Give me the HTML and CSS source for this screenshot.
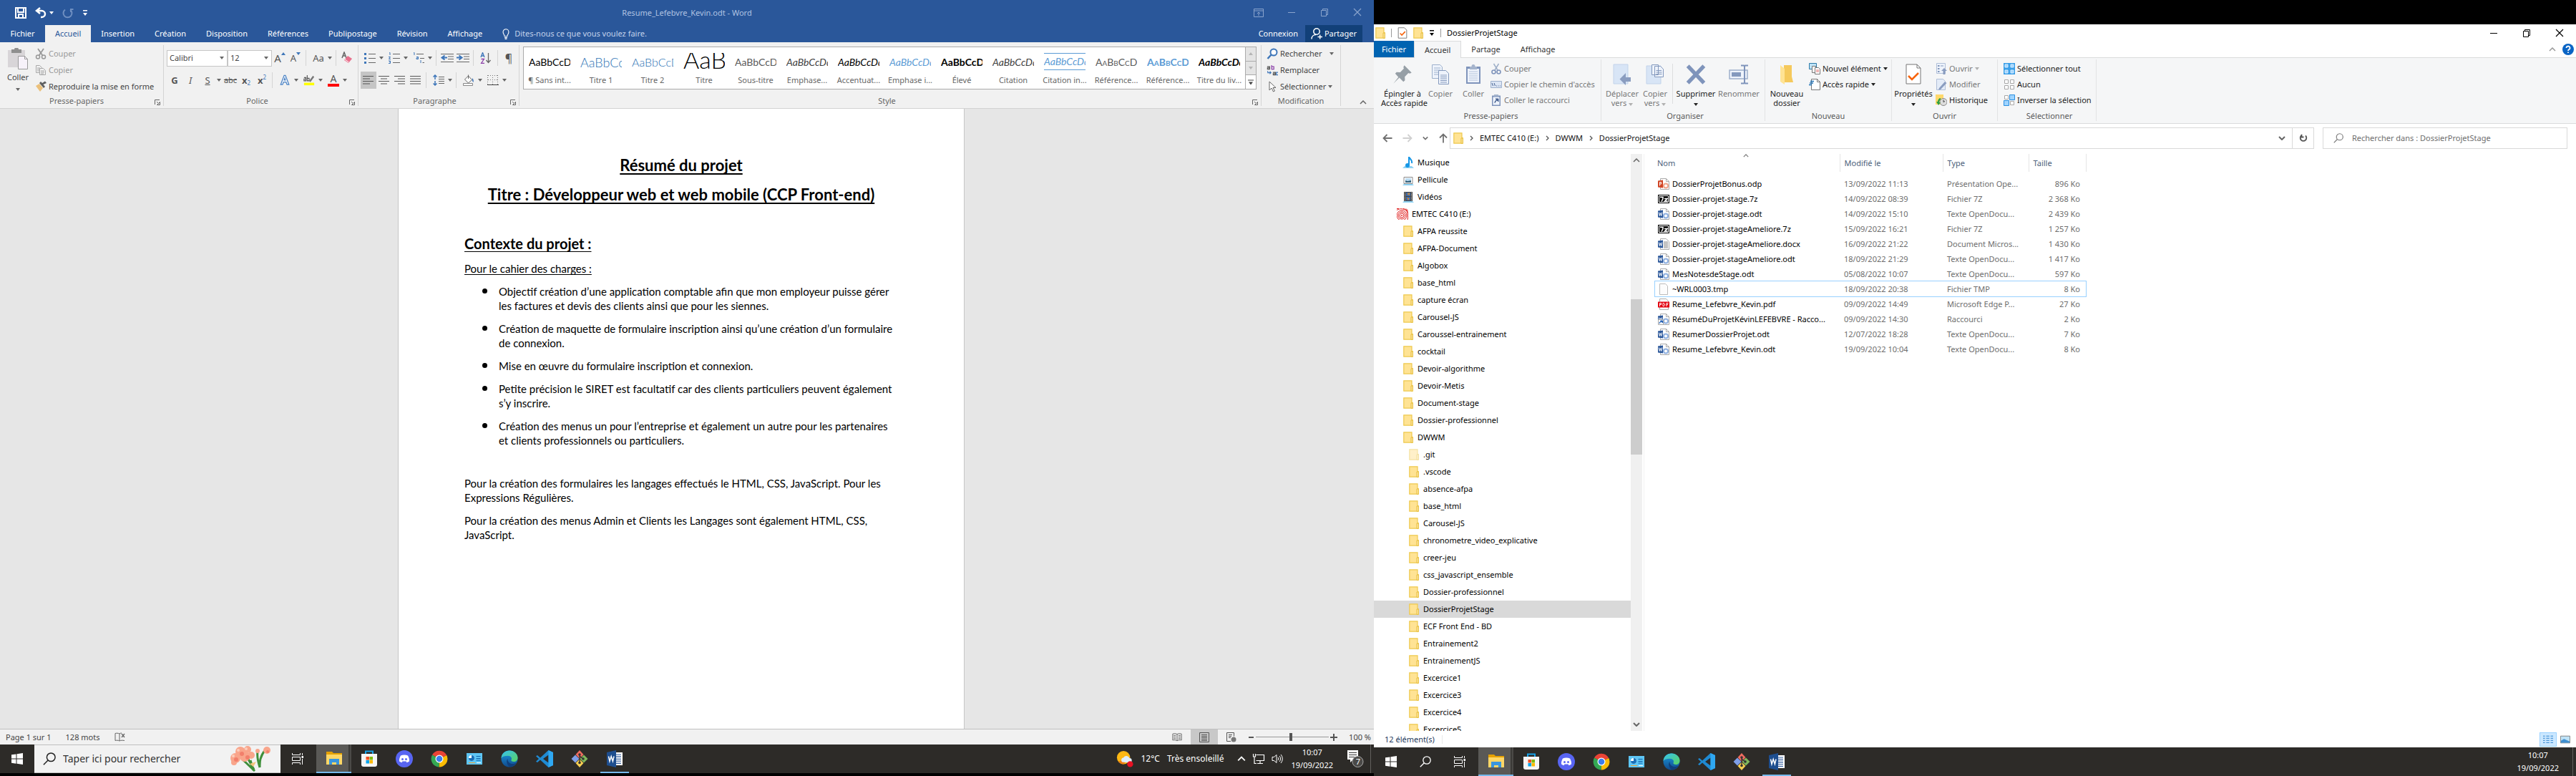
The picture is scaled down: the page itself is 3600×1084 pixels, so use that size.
FILE: index.html
```
<!DOCTYPE html>
<html lang="fr">
<head>
<meta charset="utf-8">
<title>Resume_Lefebvre_Kevin.odt - Word</title>
<link rel="stylesheet" href="styles.css">
</head>
<body>
<svg class="defs" aria-hidden="true">
  <defs>
    <linearGradient id="edge-a" x1="0" y1="0" x2="1" y2="1"><stop offset="0" stop-color="#35c1f1"/><stop offset="1" stop-color="#5bd45f"/></linearGradient>
    <linearGradient id="edge-b" x1="0" y1="0" x2="0" y2="1"><stop offset="0" stop-color="#1b9de2"/><stop offset="1" stop-color="#114a8b"/></linearGradient>
  </defs>
  <symbol id="caret" viewBox="0 0 6 4"><path d="M0 0h6L3 4z" fill="currentColor"/></symbol>
  <symbol id="launcher" viewBox="0 0 8 8"><path d="M.5 7V.5H7M3 3l3 3M7.500 3.500v4h-4z" fill="none" stroke="currentColor"/></symbol>
  <symbol id="save" viewBox="0 0 16 16"><path d="M1 1h14v14H1zM4 1v6h8V1M5 15v-5h6v5" fill="none" stroke="#fff" stroke-width="2"/></symbol>
  <symbol id="undo" viewBox="0 0 16 16"><path d="M7 1 2 5l5 4M2 5h7a5 4.500 0 0 1 0 9H8" fill="none" stroke="#fff" stroke-width="2.500"/></symbol>
  <symbol id="redo" viewBox="0 0 16 16"><path d="M4 3.500a6 6 0 1 0 7 0M12 7V3h3.500" fill="none" stroke="#6f8fc1" stroke-width="2"/></symbol>
  <symbol id="custom" viewBox="0 0 8 8"><path d="M1 0h6v1.500H1zM1 4h6L4 8z" fill="currentColor"/></symbol>
  <symbol id="ribbonopt" viewBox="0 0 14 12"><path d="M.5.5h13v11H.5zM.5 3h13M7 10V5M5 7l2-2 2 2" fill="none" stroke="currentColor"/></symbol>
  <symbol id="min" viewBox="0 0 12 12"><path d="M1 6.500h10" stroke="currentColor"/></symbol>
  <symbol id="restore" viewBox="0 0 12 12"><path d="M1.500 3.500h7v8h-7zM3.500 3.500v-2h7v8h-2" fill="none" stroke="currentColor"/></symbol>
  <symbol id="close" viewBox="0 0 12 12"><path d="m1 1 10 10M11 1 1 11" stroke="currentColor" stroke-width="1.200"/></symbol>
  <symbol id="bulb" viewBox="0 0 10 16"><path d="M3 11.500C3 9 .8 8 .8 5a4.200 4.200 0 0 1 8.400 0c0 3-2.200 4-2.200 6.500zM3 13.500h4M3.500 15.300h3" fill="none" stroke="#fff" stroke-width="1.200"/></symbol>
  <symbol id="person" viewBox="0 0 16 16"><circle cx="8" cy="5" r="4.200" fill="none" stroke="#fff" stroke-width="1.500"/><path d="M1 15.500c0-4 3-6 6-6M9.500 12.500H16M12.700 9.500v6" fill="none" stroke="#fff" stroke-width="1.500"/></symbol>
  <symbol id="paste" viewBox="0 0 28 30"><path d="M0 3h24v24H0z" fill="#d8d5d8"/><path d="M5 2h4a3 2.500 0 0 1 6 0h4v5H5z" fill="#8f8f8f"/><path d="M14.500 11.500h9l4 4v14h-13z" fill="#f7f2fa" stroke="#9b9b9b"/><path d="M23.500 11.500v4h4" fill="none" stroke="#9b9b9b"/></symbol>
  <symbol id="cut" viewBox="0 0 16 16"><path d="m4 1 6.500 9.500M12 1 5.500 10.500" stroke="currentColor" stroke-width="1.800"/><circle cx="4" cy="12.500" r="2.500" fill="none" stroke="currentColor" stroke-width="1.500"/><circle cx="12" cy="12.500" r="2.500" fill="none" stroke="currentColor" stroke-width="1.500"/></symbol>
  <symbol id="copy" viewBox="0 0 16 16"><path d="M1.500 1.500h5l3 3v7h-8zM3 5h4M3 7h4M3 9h3" fill="none" stroke="#a8a8a8"/><path d="M6.500 5.500h5l3 3v6h-8z" fill="#f1f1f1" stroke="#a8a8a8"/><path d="M8 9h5M8 11h5M8 13h4" stroke="#a8a8a8"/></symbol>
  <symbol id="brush" viewBox="0 0 16 16"><path d="M1 7 6 4l5 6-4 5z" fill="#ebc07a"/><path d="m6 3 6 7 2-2-2.500-3L16 3l-2-2.500L10 3 8 1z" fill="#5e5e5e"/></symbol>
  <symbol id="up-tri" viewBox="0 0 6 4"><path d="M3 0l3 4H0z" fill="#3e76b9"/></symbol>
  <symbol id="down-tri" viewBox="0 0 6 4"><path d="M0 0h6L3 4z" fill="#3e76b9"/></symbol>
  <symbol id="eraser" viewBox="0 0 16 18"><path d="M1 9 4 1l3 8M2 6h4" fill="none" stroke="#666" stroke-width="1.500"/><path d="m9 6 6 4-5 6-6-4z" fill="#e8718d"/><path d="m5 11 5.500 4" stroke="#fff"/></symbol>
  <symbol id="bullets" viewBox="0 0 16 16"><path d="M0 1h3v3H0zM0 7h3v3H0zM0 13h3v3H0z" fill="#3e76b9"/><path d="M6 2.500h10M6 8.500h10M6 14.500h10" stroke="#666"/></symbol>
  <symbol id="numbers" viewBox="0 0 16 16"><path d="M1 1l1-.5V4M0 6.500h2.500L.5 9.500h2.500M0 12h2.500v1.500H1 2.500v2H0" fill="none" stroke="#3e76b9"/><path d="M6 2.500h10M6 8.500h10M6 14.500h10" stroke="#666"/></symbol>
  <symbol id="multi" viewBox="0 0 16 16"><path d="M1 1l1-.5V4M5 6.500h2.500v3H5V8h2M11 11v4" fill="none" stroke="#3e76b9"/><path d="M5 2.500h10M10 8.500h6M13.500 14.500H16" stroke="#666"/></symbol>
  <symbol id="outdent" viewBox="0 0 18 14"><path d="M0 1.500h18M10 5h8M10 8.500h8M0 12.500h18" stroke="#666"/><path d="M9 6.500H3M5.500 3.500l-4 3 4 3" fill="none" stroke="#3e76b9" stroke-width="2"/></symbol>
  <symbol id="indent" viewBox="0 0 18 14"><path d="M0 1.500h18M10 5h8M10 8.500h8M0 12.500h18" stroke="#666"/><path d="M0 6.500h6M3.500 3.500l4 3-4 3" fill="none" stroke="#3e76b9" stroke-width="2"/></symbol>
  <symbol id="sort" viewBox="0 0 16 16"><path d="M1 7 3.500.5 6 7M2 5h3" fill="none" stroke="#3e76b9" stroke-width="1.300"/><path d="M1.500 9.500h4l-4 6h4.500" fill="none" stroke="#8a3fa8" stroke-width="1.300"/><path d="M11.500 1v13M8.500 11l3 3.500 3-3.500" fill="none" stroke="#666" stroke-width="1.300"/></symbol>
  <symbol id="al" viewBox="0 0 16 14"><path d="M0 1.500h15M0 5h10M0 8.500h15M0 12h10" stroke="#555"/></symbol>
  <symbol id="ac" viewBox="0 0 16 14"><path d="M0 1.500h15M3 5h9M0 8.500h15M3 12h9" stroke="#555"/></symbol>
  <symbol id="ar" viewBox="0 0 16 14"><path d="M0 1.500h15M5 5h10M0 8.500h15M5 12h10" stroke="#555"/></symbol>
  <symbol id="aj" viewBox="0 0 16 14"><path d="M0 1.500h15M0 5h15M0 8.500h15M0 12h15" stroke="#555"/></symbol>
  <symbol id="spacing" viewBox="0 0 16 16"><path d="M3 1v6M.5 3.500 3 1l2.500 2.500M3 9v6M.5 12.500 3 15l2.500-2.500" fill="none" stroke="#3e76b9" stroke-width="1.500"/><path d="M8 3.500h8M8 6.500h8M8 9.500h8M8 12.500h8" stroke="#666"/></symbol>
  <symbol id="bucket" viewBox="0 0 16 16"><path d="m2.500 7 5-5 5 5.500-5 4.500zM7.500 6V.5" fill="#fff" stroke="#666"/><path d="M13 5c2 2 2 4 1.500 6-1.500-1-2-3-1.500-6z" fill="#3e76b9"/><path d="M.5 12.500h13v3H.5z" fill="#fff" stroke="#888"/></symbol>
  <symbol id="borders" viewBox="0 0 16 16"><path d="M.5 1v14M7.500 1v14M14.500 1v14M1 1.500h14M1 7.500h14" fill="none" stroke="#777" stroke-dasharray="1 2"/><path d="M0 14.500h16" stroke="#444"/></symbol>
  <symbol id="texteffect" viewBox="0 0 16 18"><path d="M1.500 16 7 1.500h2L14.500 16h-3L10 12H6l-1.500 4zM7 9h2L8 6z" fill="#fff" stroke="#4a82c4" stroke-width="1.400"/></symbol>
  <symbol id="marker" viewBox="0 0 18 18"><path d="M1 5h3v5H1V7h3M6 1v9h3V6H6" fill="none" stroke="#555" stroke-width="1.300"/><path d="m9 10 6-8 2 2-6 8z" fill="#777"/><path d="M1 13h16v4H1z" fill="#ff0"/></symbol>
  <symbol id="find" viewBox="0 0 16 16"><circle cx="10" cy="6" r="4.500" fill="#fff" stroke="#3e76b9" stroke-width="2"/><path d="M6.500 9.500 1.500 15" stroke="#3e76b9" stroke-width="2.500"/></symbol>
  <symbol id="replace" viewBox="0 0 18 18"><path d="M1 3.500h4v4H1.500V5.500H5M10 12.500h4v4h-3.500v-2H14" fill="none" stroke="#555" stroke-width="1.300"/><path d="M8 1v6.500h3.500v-4H8" fill="none" stroke="#8a3fa8" stroke-width="1.300"/><path d="M18 12.500h-2.500v4H18M2 10v3h5M5 11l2 2-2 2" fill="none" stroke="#3e76b9" stroke-width="1.300"/></symbol>
  <symbol id="pointer" viewBox="0 0 12 16"><path d="M2 1v12l3-3 2.500 5 2-1L7 9.500h4z" fill="#fff" stroke="#666"/></symbol>
  <symbol id="chev-up" viewBox="0 0 10 6"><path d="M1 5l4-4 4 4" fill="none" stroke="currentColor" stroke-width="1.500"/></symbol>
  <symbol id="chev-down" viewBox="0 0 10 6"><path d="M1 1l4 4 4-4" fill="none" stroke="currentColor" stroke-width="2"/></symbol>
  <symbol id="chev-right" viewBox="0 0 5 8"><path d="M1 1l3 3-3 3" fill="none" stroke="currentColor" stroke-width="1.300"/></symbol>
  <symbol id="more" viewBox="0 0 8 7"><path d="M0 0h8v1H0zM1 3h6L4 7z" fill="currentColor"/></symbol>
  <symbol id="proof" viewBox="0 0 16 14"><path d="M7 2C5 1 3 1 1 1.500v10c2-.5 4-.5 6 .5zM7 2c1-.8 2-1 3-1M7 12c2-1 4-1 7-.5" fill="none" stroke="#666"/><path d="m10 2 4 5M14 2l-4 5" stroke="#666" stroke-width="1.300"/></symbol>
  <symbol id="read" viewBox="0 0 16 14"><path d="M8 2C6 .8 3 .8 1 1.500v10C3 11 6 11 8 12.500 10 11 13 11 15 11.500v-10C13 .8 10 .8 8 2zv10M2.500 4H6M2.500 6.500H6M2.500 9H6M10 4h3.500M10 6.500h3.500M10 9h3.500" fill="none" stroke="#555"/></symbol>
  <symbol id="print" viewBox="0 0 14 14"><path d="M.5.500h13v13H.5zM3 3.500h8M3 5.500h8M3 7.500h8M3 9.500h8M3 11.500h8" fill="none" stroke="#555"/></symbol>
  <symbol id="web" viewBox="0 0 14 14"><path d="M6 12.500H.5V.500h10v5M3 3.500h5M3 5.500h4M3 7.500h3" fill="none" stroke="#555"/><circle cx="10" cy="10" r="3.500" fill="#777"/></symbol>

  <symbol id="windows" viewBox="0 0 16 16"><path d="M0 2.300 6.500 1.400v6.200H0zM7.500 1.200 16 0v7.600H7.500zM0 8.500h6.500v6.200L0 13.800zM7.500 8.500H16V16l-8.500-1.200z" fill="#fff"/></symbol>
  <symbol id="search" viewBox="0 0 16 16"><circle cx="10" cy="6" r="5.200" fill="none" stroke="currentColor" stroke-width="1.300"/><path d="M6.300 9.700.8 15.300" stroke="currentColor" stroke-width="1.300"/></symbol>
  <symbol id="taskview" viewBox="0 0 16 16"><path d="M.5 0v2.500h11V0M.5 16v-2.500h11V16M.5 5.500h11v5H.5zM14.500 0v3M14.500 8v8" fill="none" stroke="#fff"/><path d="M13.500 4h2.500v3h-2.500z" fill="#fff"/></symbol>
  <symbol id="explorer" viewBox="0 0 24 24"><path d="M1 3h8l2 2h12v4H1z" fill="#e5a100"/><path d="M1 7h22v14H1z" fill="#ffd766"/><path d="M5 13h14v8h-4v-3H9v3H5z" fill="#3a96dd"/></symbol>
  <symbol id="store" viewBox="0 0 24 24"><path d="M7 6V1.500h10V6" fill="none" stroke="#17a2e8" stroke-width="2"/><path d="M1 5h22v15a3 3 0 0 1-3 3H4a3 3 0 0 1-3-3z" fill="#f5f5f5"/><path d="M7.500 9H12v4.500H7.500z" fill="#f25022"/><path d="M12.500 9H17v4.500h-4.500z" fill="#7fba00"/><path d="M7.500 14H12v4.500H7.500z" fill="#00a4ef"/><path d="M12.500 14H17v4.500h-4.500z" fill="#ffb900"/></symbol>
  <symbol id="discord" viewBox="0 0 24 24"><circle cx="12" cy="12" r="12" fill="#5865f2"/><path d="M7 7.500c3-1.500 7-1.500 10 0 1.500 2.500 2.300 5.500 2 8-1 .9-2.300 1.500-3.500 1.700l-1-1.700h-5l-1 1.700C7.300 17 6 16.400 5 15.500c-.3-2.500.5-5.500 2-8z" fill="#fff"/><circle cx="9.500" cy="12.500" r="1.500" fill="#5865f2"/><circle cx="14.500" cy="12.500" r="1.500" fill="#5865f2"/></symbol>
  <symbol id="chrome" viewBox="0 0 24 24"><path d="M12 12 2 6.500A11.500 11.500 0 0 1 22.300 7z" fill="#ea4335"/><path d="M12 12 22.300 7A11.500 11.500 0 0 1 11.500 23.500z" fill="#fbbc04"/><path d="M12 12l-.5 11.500A11.500 11.500 0 0 1 2 6.500z" fill="#34a853"/><circle cx="12" cy="12" r="5.500" fill="#fff"/><circle cx="12" cy="12" r="4.300" fill="#3b7ded"/></symbol>
  <symbol id="panel" viewBox="0 0 24 24"><path d="M1 4h22v16H1z" fill="#5ec6f5"/><circle cx="8" cy="11" r="4" fill="#fff"/><path d="M8 11V7a4 4 0 1 1-4 4z" fill="#1a6fb8"/><path d="M14.500 8.500h6M14.500 11.500h6M14.500 14h6" stroke="#0d5fa8"/><path d="M4 17.500h9" stroke="#f2a93b"/><path d="M15 17.500h6" stroke="#fff"/></symbol>
  <symbol id="edge" viewBox="0 0 24 24"><circle cx="12" cy="12" r="11.500" fill="url(#edge-b)"/><path d="M.5 11C1 4.500 6 .5 12 .5 18.500.5 23.500 5 23.500 10.500c0 3.500-2.500 5.500-5.500 5.500-2.500 0-4-1-3.500-2.200 1.500-2.800-.5-6-4.500-6C5.500 7.800 2 9 .5 11z" fill="url(#edge-a)"/><path d="M9.500 12c-.5 4 3 7.500 8 7 2-.2 3.500-1 4.500-2-1.500 3-4.500 5.800-9 6.300C9 22 6.500 15 9.500 12z" fill="#0f3f7c"/></symbol>
  <symbol id="vscode" viewBox="0 0 24 24"><path d="M17.500 0 24 3v18l-6.500 3L6 13.500 2 17l-2-1.200L4 12 0 8.200 2 7l4 3.500zM17.500 6.500 10 12l7.500 5.500z" fill="#1f8ad2"/><path d="M17.500 0 24 3v18l-6.500 3z" fill="#2fa8f2"/></symbol>
  <symbol id="git" viewBox="0 0 24 24"><path d="m12 0 5.500 6L12 12 6.500 6z" fill="#f06c5f"/><path d="m6 6.500 5.500 5.500L6 17.500.500 12z" fill="#7f9fe8"/><path d="m18 6.500 5.500 5.500-5.500 5.500-5.500-5.500z" fill="#80b85c"/><path d="m12 12.500 5.500 5.500-5.500 6-5.500-6z" fill="#f7cf52"/><path d="M12 5v13M12 8l5 4" stroke="#333" stroke-width="1.400"/><circle cx="12" cy="6" r="1.800" fill="#333"/><circle cx="12" cy="17.500" r="1.800" fill="#333"/><circle cx="17" cy="12" r="1.800" fill="#333"/></symbol>
  <symbol id="wordapp" viewBox="0 0 24 24"><path d="M12 3h11v18H12z" fill="#fff"/><path d="M14 6h7M14 8.500h7M14 11h7M14 13.500h7M14 16h7M14 18.500h7" stroke="#2b579a"/><path d="M1 3 14 0v24L1 21z" fill="#1e4e8f"/><path d="m3.500 8.500 1.500 7 2.200-7 2.200 7 1.600-7" fill="none" stroke="#fff" stroke-width="1.500"/></symbol>
  <symbol id="flowers" viewBox="0 0 60 36"><path d="M18 18 36 35M25 15l10 18M43 30c0-8 0-15 8-25M43 30c-3-10-4-16-3-22M30 20l4 14" fill="none" stroke="#3f8f3a" stroke-width="3"/><g fill="#f9a58b"><circle cx="16" cy="8" r="7"/><circle cx="26" cy="5" r="5"/><circle cx="9" cy="17" r="7"/><circle cx="22" cy="15" r="7"/><circle cx="31" cy="13" r="5"/><circle cx="7" cy="23" r="4"/><circle cx="53" cy="6" r="5"/><circle cx="40" cy="7" r="3"/></g><g fill="#f27f6b"><circle cx="18" cy="11" r="3"/><circle cx="10" cy="19" r="3"/><circle cx="26" cy="16" r="3"/><circle cx="54" cy="8" r="2"/></g><g fill="#fdcdbb"><circle cx="13" cy="6" r="2"/><circle cx="24" cy="4" r="2"/><circle cx="6" cy="14" r="2"/></g><path d="M29 25l9-3-4 7z" fill="#f3c57f"/></symbol>
  <symbol id="weather" viewBox="0 0 26 26"><circle cx="11" cy="11" r="10" fill="#fdb813"/><path d="M3 17a10 10 0 0 0 8 4l10-10z" fill="#f07f13"/><path d="M9 18a4 4 0 0 1 2-7 5 5 0 0 1 9 1 3.500 3.500 0 0 1 0 7z" fill="#dfeefb"/><circle cx="21" cy="21" r="4.500" fill="#e81123"/></symbol>
  <symbol id="network" viewBox="0 0 18 16"><path d="M5.500 2.500h11v8h-11M11 10.500v4M7 14.500h8M1.500 1v4h3V1M3 5v9.500h3" fill="none" stroke="#fff" stroke-width="1.200"/></symbol>
  <symbol id="sound" viewBox="0 0 16 14"><path d="M1 4.500h2.500L7 1.500v11L3.500 9.500H1zM9 5a3 3 0 0 1 0 4M11 3a6 6 0 0 1 0 8M13 1a9 9 0 0 1 0 12" fill="none" stroke="#fff"/></symbol>
  <symbol id="notif" viewBox="0 0 24 26"><path d="M1 1h15v13H9l-4 4v-4H1z" fill="#fff"/><path d="M3 4.500h11M3 7.500h11M3 10.500h8" stroke="#333"/><circle cx="15.500" cy="17" r="7.500" fill="#4a4947" stroke="#aaa"/></symbol>

  <symbol id="folder" viewBox="0 0 14 16"><path d="M.8.800H12v6.700h1.200v7.700H.8z" fill="#ffe394" stroke="#eec94f" stroke-width="1.200"/><path d="M11 8h2.300v7.300H11z" fill="#ffe9a8" stroke="#e6bd3c" stroke-width="1"/></symbol>
  <symbol id="doccheck" viewBox="0 0 14 17"><path d="M.8.800h9l3.400 3.500v11.900H.8z" fill="#fff" stroke="#777"/><path d="m3.500 9 2.500 2.700L11 6.500" fill="none" stroke="#f7630c" stroke-width="1.700"/></symbol>
  <symbol id="bigcheck" viewBox="0 0 22 30"><path d="M1 1h15l5 5v22H1z" fill="#fff" stroke="#777"/><path d="M16 1v5h5" fill="none" stroke="#777"/><path d="m4 17 5 5 9-9" fill="none" stroke="#f7630c" stroke-width="2.500"/></symbol>
  <symbol id="pin" viewBox="0 0 22 22"><path d="m13 1 8 8-2 1-1.500-.5-4 4 .2 4L12 19l-4.500-4.500L1 21l5.500-7L3 10l1.500-1.600 4 .2 4-4L12 3z" fill="#969fa6"/></symbol>
  <symbol id="bigcopy" viewBox="0 0 26 30"><path d="M1.500 1.500h11l3 3v16h-14z" fill="#eef3fb" stroke="#9db0cc"/><path d="M4 6h9M4 9h9M4 12h9M4 15h9" stroke="#9db0cc"/><path d="M10.500 9.500h10l4 4v15h-14z" fill="#eef3fb" stroke="#8499bd"/><path d="M13 16h9M13 18.500h9M13 21h9M13 23.500h9M13 26h9" stroke="#8499bd"/></symbol>
  <symbol id="bigpaste" viewBox="0 0 22 30"><path d="M1 4h20v24H1z" fill="#7f94bb"/><path d="M3 7h16v19H3z" fill="#eef3fb"/><path d="M6 4h2.500a2.500 3 0 0 1 5 0H16v4H6z" fill="#a5b4cc"/><path d="M5 11h12M5 14h12M5 17h12M5 20h12M5 23h12" stroke="#b5c4dc"/></symbol>
  <symbol id="bluecut" viewBox="0 0 16 16"><path d="m4.500 1 5.500 9M11.500 1 6 10" stroke="#9fb0c8" stroke-width="1.500"/><circle cx="4.500" cy="12.500" r="2.500" fill="none" stroke="#7f94bb" stroke-width="1.600"/><circle cx="11.500" cy="12.500" r="2.500" fill="none" stroke="#7f94bb" stroke-width="1.600"/></symbol>
  <symbol id="path" viewBox="0 0 16 10"><path d="M.5.500h15v9H.5z" fill="#dce6f5" stroke="#9db0cc"/><path d="m2 3 1.500 4M5 3l1.500 4M8 7h1M10.500 7h1M13 7h1" stroke="#44608f"/></symbol>
  <symbol id="shortcut" viewBox="0 0 16 16"><path d="M2 1.500h12V16H2z" fill="#7f94bb"/><path d="M3.500 3.500h9v11h-9z" fill="#eef3fb"/><path d="M5 0h6v2.500H5z" fill="#a5b4cc"/><path d="M6 12c0-3 1-4 3.500-4.500M7 6h4v4z" fill="#4a6594" stroke="#4a6594"/></symbol>
  <symbol id="moveto" viewBox="0 0 26 30"><path d="M1 1h20v27H1z" fill="#d8e5f6" stroke="#c2d3ea"/><path d="M25 19h-7v-6l-8.500 8.500L18 30v-5h7z" fill="#8a9dc0"/></symbol>
  <symbol id="copyto" viewBox="0 0 26 30"><path d="M1 3h20v25H1z" fill="#d8e5f6" stroke="#c2d3ea"/><path d="M8.500 1.500h9v14h-9zM12.500 3.500h8l4 4v11h-12z" fill="#eef3fb" stroke="#8499bd"/><path d="M14.500 9.500H22M14.500 12h8M14.500 14.500h8" stroke="#8499bd"/></symbol>
  <symbol id="delete" viewBox="0 0 26 26"><path d="m2.500 2 21 22M23.500 2l-21 22" stroke="#7f94bb" stroke-width="5"/></symbol>
  <symbol id="rename" viewBox="0 0 28 28"><path d="M1 8h25v12H1z" fill="#eef3fb" stroke="#9db0cc" stroke-width="1.500"/><path d="M4 11h13v6H4z" fill="#8499bd"/><path d="M17 1.500h4l1 1 1-1h4M17 26.500h4l1-1 1 1h4M22 2v24" fill="none" stroke="#7f94bb" stroke-width="2"/></symbol>
  <symbol id="newfolder" viewBox="0 0 20 30"><path d="M6 2h11v16l2 8H6z" fill="#f5c95c"/><path d="m1 2 6 5v22l-6-4z" fill="#ffe394"/></symbol>
  <symbol id="newitem" viewBox="0 0 16 16"><path d="M.5.500h10v8H.5z" fill="#bfe3f7" stroke="#2d7aa8"/><path d="M4.500 4.500h5v9h-5z" fill="#fff" stroke="#777"/><path d="M8.500 6.500h5l2 2v7h-7z" fill="#fff" stroke="#777"/><path d="M10 10h4M10 12h4" stroke="#e06a6a"/></symbol>
  <symbol id="easy" viewBox="0 0 16 16"><path d="M3.500.500h8l4 4v11h-12z" fill="#fff" stroke="#777"/><path d="M11.500.500v4h4" fill="none" stroke="#777"/><path d="M2 3.500h5M1 6h5M0 8.500h4" stroke="#1b6fb5" stroke-width="1.500"/></symbol>
  <symbol id="open" viewBox="0 0 16 16"><path d="M1.500.500h12v14h-12z" fill="#eef3fb" stroke="#b0bfd8"/><path d="M3 3h2.500v2H3zM3 7h2.500v2H3zM3 11h2.500v2H3z" fill="#8499bd"/><path d="M7 4h4" stroke="#8499bd"/><path d="m12 7 4 4h-2.500v5h-3v-5H8z" fill="#8a9dc0"/></symbol>
  <symbol id="edit" viewBox="0 0 16 16"><path d="M1.500.500h9l3 3v12h-12z" fill="#e4ecf8" stroke="#b0bfd8"/><path d="m5 13 8-9 2.500 2L7 15l-3 .5z" fill="#8a9dc0"/></symbol>
  <symbol id="history" viewBox="0 0 16 16"><path d="M0 0h11v14H0z" fill="#ffd96b"/><circle cx="11" cy="10.500" r="5" fill="#ddd" stroke="#888"/><path d="M11 7.500v3l2-1" fill="none" stroke="#444"/><path d="M3 10c0-3 2-5 4-5v2c-1 1-2 2-2 4h2l-3 4-3-5z" fill="#2ea043"/></symbol>
  <symbol id="selall" viewBox="0 0 16 16"><path d="M0 0h16v16H0z" fill="#3a9fe8"/><path d="M2 2h4v4H2zM10 2h4v4h-4zM2 10h4v4H2zM10 10h4v4h-4z" fill="#9fd4ff" stroke="#d9eeff"/></symbol>
  <symbol id="selnone" viewBox="0 0 16 16"><path d="M1.500 1.500h5v5h-5zM9.500 1.500h5v5h-5zM1.500 9.500h5v5h-5zM9.500 9.500h5v5h-5z" fill="#fff" stroke="#a8a8a8"/></symbol>
  <symbol id="selinv" viewBox="0 0 16 16"><path d="M1.500 1.500h5v5h-5zM9.500 9.500h5v5h-5z" fill="#fff" stroke="#a8a8a8"/><path d="M8.500.500h7v7h-7zM.5 8.500h7v7h-7z" fill="#9fd4ff" stroke="#2b8fe0"/></symbol>
  <symbol id="help" viewBox="0 0 16 16"><circle cx="8" cy="8" r="8" fill="#0a64c4"/><path d="M5.500 6a2.500 2.500 0 1 1 3.500 2.300c-.8.500-1 .9-1 1.700M8 11.500v1.500" fill="none" stroke="#fff" stroke-width="1.800"/></symbol>
  <symbol id="arrow-l" viewBox="0 0 14 12"><path d="M13.500 6H2M6.500 1 1.500 6l5 5" fill="none" stroke="currentColor" stroke-width="1.800"/></symbol>
  <symbol id="arrow-r" viewBox="0 0 14 12"><path d="M.5 6H12M7.500 1l5 5-5 5" fill="none" stroke="currentColor" stroke-width="1.800"/></symbol>
  <symbol id="arrow-u" viewBox="0 0 12 14"><path d="M6 13.500V2M1 6.500l5-5 5 5" fill="none" stroke="currentColor" stroke-width="1.800"/></symbol>
  <symbol id="refresh" viewBox="0 0 12 12"><path d="M3 2.500a4.300 4.300 0 1 0 6 0M6.500 4.500h-3V.800" fill="none" stroke="currentColor" stroke-width="1.800"/></symbol>
  <symbol id="music" viewBox="0 0 16 16"><path d="M3 13h10l3 3H0z" fill="#8fd3f5"/><circle cx="7" cy="12" r="3" fill="#1797e6"/><path d="M9 12V0c1 3 5 4 4 9" fill="none" stroke="#1797e6" stroke-width="2"/></symbol>
  <symbol id="photos" viewBox="0 0 16 16"><path d="M3 13h10l3 3H0z" fill="#8fd3f5"/><path d="M2 4.500h12v9H2z" fill="#fff" stroke="#8a8a8a"/><path d="M4 6h8v6H4z" fill="#bcdcf2"/><path d="M4 9l3 1 5-1v3H4z" fill="#35637c"/></symbol>
  <symbol id="videos" viewBox="0 0 16 16"><path d="M3 13h10l3 3H0z" fill="#8fd3f5"/><path d="M2 1h12v13H2z" fill="#444"/><path d="M5 2h6v5H5zM5 8h6v5H5z" fill="#3c6cb0"/><path d="M6 4l4-2v4zM6 9l4 1-2 3z" fill="#c98735"/><path d="M3.500 2v11M12.500 2v11" stroke="#ddd" stroke-dasharray="1 1"/></symbol>
  <symbol id="drive" viewBox="0 0 16 16"><path d="M0 0h16v16H0z" fill="#fff"/><g fill="none" stroke="#e02020"><circle cx="7" cy="10" r="3"/><circle cx="7" cy="10" r="5"/><circle cx="7" cy="10" r="7"/><path d="M0 2.500C4 0 10 0 14 4c2 3 2 8 1 12M0 .5h3M9 .5C13 1 16 4 16 8M13 .5l3 3M7 9v2M6 10h2"/></g></symbol>
  <symbol id="f-odp" viewBox="0 0 16 16"><path d="M3.500.500h8l4 4v11h-12z" fill="#fff" stroke="#aaa"/><path d="M11.500.500v4h4" fill="none" stroke="#aaa"/><circle cx="11" cy="10.500" r="3" fill="none" stroke="#f0a58b" stroke-width="2"/><path d="M0 3.500 7 2.500v11l-7-1z" fill="#d04525"/><path d="M2.500 10.500v-5h2v2.500h-2" fill="none" stroke="#fff"/></symbol>
  <symbol id="f-odt" viewBox="0 0 16 16"><path d="M3.500.500h8l4 4v11h-12z" fill="#fff" stroke="#aaa"/><path d="M11.500.500v4h4" fill="none" stroke="#aaa"/><circle cx="11" cy="10.500" r="3" fill="none" stroke="#8fb0e0" stroke-width="2"/><path d="M0 3.500 7 2.500v11l-7-1z" fill="#2b579a"/><path d="m1.300 5.500 1 5 1.200-4 1.200 4 1-5" fill="none" stroke="#fff"/></symbol>
  <symbol id="f-docx" viewBox="0 0 16 16"><path d="M3.500.500h8l4 4v11h-12z" fill="#fff" stroke="#aaa"/><path d="M8 5h6M8 7h6M8 9h6M8 11h6M8 13h6" stroke="#888"/><path d="M0 3.500 7 2.500v11l-7-1z" fill="#2b579a"/><path d="m1.300 5.500 1 5 1.200-4 1.200 4 1-5" fill="none" stroke="#fff"/></symbol>
  <symbol id="f-7z" viewBox="0 0 16 16"><path d="M0 2h16v12H0z"/><path d="M1.500 3.500h13v9h-13z" fill="#000" stroke="#fff"/><path d="M3 5.500h4v2l-2 4M9 7.500h4l-3.500 3.500h4" fill="none" stroke="#fff" stroke-width="1.500"/></symbol>
  <symbol id="f-tmp" viewBox="0 0 16 16"><path d="M2.500.500h8l3 3v12h-11z" fill="#fcfcfc" stroke="#bbb"/></symbol>
  <symbol id="f-pdf" viewBox="0 0 16 16"><path d="M2.500.500h9l3 3v12h-12z" fill="#fff" stroke="#aaa"/><path d="M0 4.500h16v8H0z" fill="#e2000f"/><path d="M2.500 11V6.500h2v2h-2M7 6.500v4h1.500l1-1v-2l-1-1zM12 11V6.500h2.500M12 8.500h2" fill="none" stroke="#fff"/></symbol>
  <symbol id="f-lnk" viewBox="0 0 16 16"><use href="#f-odt"/><path d="M.5 8.500h7v7h-7z" fill="#fff" stroke="#aaa"/><path d="M2 14c0-2 1-3 3-3M3.500 10h3v3z" fill="#1f5fb8" stroke="#1f5fb8"/></symbol>
  <symbol id="v-detail" viewBox="0 0 16 14"><path d="M0 1.500h3M5 1.500h5M12 1.500h4M0 5h3M5 5h5M12 5h4M0 8.500h3M5 8.500h5M12 8.500h4M0 12h3M5 12h5M12 12h4" stroke="#1976c8"/></symbol>
  <symbol id="v-large" viewBox="0 0 16 14"><path d="M.5 1.500h15v11H.5z" fill="#bfe3f7" stroke="#777"/><path d="M1 9l5-3 9 4v2H1z" fill="#3f8fd0"/></symbol>
</svg>

<section class="desktop desktop-word">
  <div class="word">
    <header class="word-title">
      <nav class="quick">
        <button aria-label="Enregistrer"><svg class="i16"><use href="#save"/></svg></button>
        <button aria-label="Annuler"><svg class="i16"><use href="#undo"/></svg><svg class="caret"><use href="#caret"/></svg></button>
        <button aria-label="Rétablir"><svg class="i16"><use href="#redo"/></svg></button>
        <button aria-label="Personnaliser"><svg class="i8"><use href="#custom"/></svg></button>
      </nav>
      <h1 class="win-name">Resume_Lefebvre_Kevin.odt - Word</h1>
      <div class="win-buttons">
        <button aria-label="Options du ruban"><svg class="i14"><use href="#ribbonopt"/></svg></button>
        <button aria-label="Réduire"><svg class="i12"><use href="#min"/></svg></button>
        <button aria-label="Restaurer"><svg class="i12"><use href="#restore"/></svg></button>
        <button aria-label="Fermer"><svg class="i12"><use href="#close"/></svg></button>
      </div>
    </header>
    <nav class="word-tabs">
      <button class="tab file">Fichier</button>
      <button class="tab active">Accueil</button>
      <button class="tab">Insertion</button>
      <button class="tab">Création</button>
      <button class="tab">Disposition</button>
      <button class="tab">Références</button>
      <button class="tab">Publipostage</button>
      <button class="tab">Révision</button>
      <button class="tab">Affichage</button>
      <button class="tab tell"><svg class="bulb"><use href="#bulb"/></svg>Dites-nous ce que vous voulez faire.</button>
      <a class="login" href="#connexion">Connexion</a>
      <button class="share"><svg class="i16"><use href="#person"/></svg>Partager</button>
    </nav>
    <div class="word-ribbon">
      <section class="group g-clip">
        <div class="clip">
          <button class="coller"><svg class="paste"><use href="#paste"/></svg>Coller<svg class="caret"><use href="#caret"/></svg></button>
          <div class="stack">
            <button disabled><svg class="i16"><use href="#cut"/></svg>Couper</button>
            <button disabled><svg class="i16"><use href="#copy"/></svg>Copier</button>
            <button><svg class="i16"><use href="#brush"/></svg>Reproduire la mise en forme</button>
          </div>
        </div>
        <h2>Presse-papiers<svg class="launch"><use href="#launcher"/></svg></h2>
      </section>
      <section class="group g-font">
        <div class="tools">
          <span class="combo combo-font"><select aria-label="Police"><option>Calibri</option></select><svg class="caret"><use href="#caret"/></svg></span>
          <span class="combo combo-size"><select aria-label="Taille"><option>12</option></select><svg class="caret"><use href="#caret"/></svg></span>
          <button class="ic grow">A<svg class="tri"><use href="#up-tri"/></svg></button>
          <button class="ic shrink">A<svg class="tri"><use href="#down-tri"/></svg></button>
          <i class="sep"></i>
          <button class="split"><span class="glyph">Aa</span><svg class="caret"><use href="#caret"/></svg></button>
          <i class="sep"></i>
          <button class="ic" aria-label="Effacer la mise en forme"><svg class="i18"><use href="#eraser"/></svg></button>
        </div>
        <div class="tools">
          <button class="ic"><b>G</b></button>
          <button class="ic"><em>I</em></button>
          <button class="split"><span class="glyph"><u>S</u></span><svg class="caret"><use href="#caret"/></svg></button>
          <button class="ic small"><s>abc</s></button>
          <button class="ic"><b>x</b><sub>2</sub></button>
          <button class="ic"><b>x</b><sup>2</sup></button>
          <i class="sep"></i>
          <button class="split" aria-label="Effets de texte"><svg class="i16"><use href="#texteffect"/></svg><svg class="caret"><use href="#caret"/></svg></button>
          <button class="split" aria-label="Surlignage"><svg class="i16"><use href="#marker"/></svg><svg class="caret"><use href="#caret"/></svg></button>
          <button class="split"><span class="glyph red">A</span><svg class="caret"><use href="#caret"/></svg></button>
        </div>
        <h2>Police<svg class="launch"><use href="#launcher"/></svg></h2>
      </section>
      <section class="group g-para">
        <div class="tools">
          <button class="split" aria-label="Puces"><svg class="i16"><use href="#bullets"/></svg><svg class="caret"><use href="#caret"/></svg></button>
          <button class="split" aria-label="Numérotation"><svg class="i16"><use href="#numbers"/></svg><svg class="caret"><use href="#caret"/></svg></button>
          <button class="split" aria-label="Liste à plusieurs niveaux"><svg class="i16"><use href="#multi"/></svg><svg class="caret"><use href="#caret"/></svg></button>
          <i class="sep"></i>
          <button class="ic" aria-label="Diminuer le retrait"><svg class="i18"><use href="#outdent"/></svg></button>
          <button class="ic" aria-label="Augmenter le retrait"><svg class="i18"><use href="#indent"/></svg></button>
          <i class="sep"></i>
          <button class="ic wide" aria-label="Trier"><svg class="i16"><use href="#sort"/></svg></button>
          <i class="sep"></i>
          <button class="ic pilcrow">¶</button>
        </div>
        <div class="tools">
          <button class="ic on" aria-label="Aligner à gauche"><svg class="i16"><use href="#al"/></svg></button>
          <button class="ic" aria-label="Centrer"><svg class="i16"><use href="#ac"/></svg></button>
          <button class="ic" aria-label="Aligner à droite"><svg class="i16"><use href="#ar"/></svg></button>
          <button class="ic" aria-label="Justifier"><svg class="i16"><use href="#aj"/></svg></button>
          <i class="sep"></i>
          <button class="split" aria-label="Interligne"><svg class="i16"><use href="#spacing"/></svg><svg class="caret"><use href="#caret"/></svg></button>
          <i class="sep"></i>
          <button class="split" aria-label="Trame de fond"><svg class="i16"><use href="#bucket"/></svg><svg class="caret"><use href="#caret"/></svg></button>
          <button class="split" aria-label="Bordures"><svg class="i16"><use href="#borders"/></svg><svg class="caret"><use href="#caret"/></svg></button>
        </div>
        <h2>Paragraphe<svg class="launch"><use href="#launcher"/></svg></h2>
      </section>
      <section class="group g-style">
        <div class="gallery">
          <button class="style"><span class="pv">AaBbCcDd</span>¶ Sans int...</button>
          <button class="style"><span class="pv p-h1">AaBbCc</span>Titre 1</button>
          <button class="style"><span class="pv p-h2">AaBbCcD</span>Titre 2</button>
          <button class="style"><span class="pv p-title">AaB</span>Titre</button>
          <button class="style"><span class="pv p-grey">AaBbCcD</span>Sous-titre</button>
          <button class="style"><span class="pv p-dark p-it">AaBbCcDd</span>Emphase...</button>
          <button class="style"><span class="pv p-it">AaBbCcDd</span>Accentuat...</button>
          <button class="style"><span class="pv p-blue p-it">AaBbCcDd</span>Emphase i...</button>
          <button class="style"><span class="pv p-bold">AaBbCcDd</span>Élevé</button>
          <button class="style"><span class="pv p-dark p-it">AaBbCcDd</span>Citation</button>
          <button class="style"><span class="pv p-blue p-it p-lines">AaBbCcDd</span>Citation in...</button>
          <button class="style"><span class="pv p-grey p-caps">AaBbCcDd</span>Référence...</button>
          <button class="style"><span class="pv p-blue p-caps p-bold">AaBbCcDd</span>Référence...</button>
          <button class="style"><span class="pv p-bold p-it">AaBbCcDd</span>Titre du liv...</button>
          <div class="gscroll">
            <button disabled aria-label="Ligne précédente"><svg class="caret flip"><use href="#caret"/></svg></button>
            <button disabled aria-label="Ligne suivante"><svg class="caret"><use href="#caret"/></svg></button>
            <button aria-label="Autres"><svg class="i8"><use href="#more"/></svg></button>
          </div>
        </div>
        <h2>Style<svg class="launch"><use href="#launcher"/></svg></h2>
      </section>
      <section class="group g-edit">
        <div class="stack">
          <button><svg class="i16"><use href="#find"/></svg>Rechercher<svg class="caret gap"><use href="#caret"/></svg></button>
          <button><svg class="i16"><use href="#replace"/></svg>Remplacer</button>
          <button><svg class="i16"><use href="#pointer"/></svg>Sélectionner<svg class="caret"><use href="#caret"/></svg></button>
        </div>
        <h2>Modification</h2>
      </section>
      <button class="collapse" aria-label="Réduire le ruban"><svg class="chev"><use href="#chev-up"/></svg></button>
    </div>
    <main class="canvas">
      <article class="page">
        <h1>Résumé du projet</h1>
        <h1>Titre : Développeur web et web mobile (CCP Front-end)</h1>
        <h2>Contexte du projet :</h2>
        <p class="under">Pour le cahier des charges :</p>
        <ul>
          <li><span>Objectif création d’une application comptable afin que mon employeur puisse gérer<br>les factures et devis des clients ainsi que pour les siennes.</span></li>
          <li><span>Création de maquette de formulaire inscription ainsi qu’une création d’un formulaire<br>de connexion.</span></li>
          <li><span>Mise en œuvre du formulaire inscription et connexion.</span></li>
          <li><span>Petite précision le SIRET est facultatif car des clients particuliers peuvent également<br>s’y inscrire.</span></li>
          <li><span>Création des menus un pour l’entreprise et également un autre pour les partenaires<br>et clients professionnels ou particuliers.</span></li>
        </ul>
        <p>Pour la création des formulaires les langages effectués le HTML, CSS, JavaScript. Pour les<br>Expressions Régulières.</p>
        <p>Pour la création des menus Admin et Clients les Langages sont également HTML, CSS,<br>JavaScript.</p>
      </article>
    </main>
    <footer class="word-status">
      <span>Page 1 sur 1</span>
      <span>128 mots</span>
      <svg class="i16"><use href="#proof"/></svg>
      <div class="views">
        <button aria-label="Lecture"><svg class="i14"><use href="#read"/></svg></button>
        <button class="on" aria-label="Page"><svg class="i14"><use href="#print"/></svg></button>
        <button aria-label="Web"><svg class="i14"><use href="#web"/></svg></button>
      </div>
      <div class="zoomer">
        <button class="zoom-btn" aria-label="Zoom arrière"><i class="minus"></i></button>
        <input class="zoom" type="range" min="0" max="100" value="48" aria-label="Zoom">
        <button class="zoom-btn" aria-label="Zoom avant"><i class="plus"></i></button>
      </div>
      <span class="percent">100 %</span>
    </footer>
  </div>
  <nav class="taskbar">
    <button class="cell" aria-label="Démarrer"><svg class="i16"><use href="#windows"/></svg></button>
    <label class="tb-search"><svg class="i18"><use href="#search"/></svg><input type="search" placeholder="Taper ici pour rechercher" aria-label="Rechercher"><svg class="flowers"><use href="#flowers"/></svg></label>
    <button class="cell" aria-label="Affichage des tâches"><svg class="i16"><use href="#taskview"/></svg></button>
    <div class="apps">
      <button class="app current" aria-label="Explorateur"><svg class="i24"><use href="#explorer"/></svg></button>
      <button class="app" aria-label="Store"><svg class="i24"><use href="#store"/></svg></button>
      <button class="app" aria-label="Discord"><svg class="i24"><use href="#discord"/></svg></button>
      <button class="app" aria-label="Chrome"><svg class="i24"><use href="#chrome"/></svg></button>
      <button class="app" aria-label="Panneau"><svg class="i24"><use href="#panel"/></svg></button>
      <button class="app" aria-label="Edge"><svg class="i24"><use href="#edge"/></svg></button>
      <button class="app" aria-label="Code"><svg class="i24"><use href="#vscode"/></svg></button>
      <button class="app" aria-label="Git"><svg class="i24"><use href="#git"/></svg></button>
      <button class="app running" aria-label="Word"><svg class="i24"><use href="#wordapp"/></svg></button>
    </div>
    <div class="tray">
      <span class="weather"><svg class="i24"><use href="#weather"/></svg><span>12°C</span><span>Très ensoleillé</span></span>
      <svg class="tray-up"><use href="#chev-up"/></svg>
      <svg class="i18"><use href="#network"/></svg>
      <svg class="i16"><use href="#sound"/></svg>
      <time class="clock">10:07<br>19/09/2022</time>
      <button class="notif" aria-label="Notifications"><svg><use href="#notif"/></svg><span>7</span></button>
      <i class="peek"></i>
    </div>
  </nav>
</section>

<section class="desktop desktop-files">
  <div class="files">
    <header class="files-title">
      <svg class="fold"><use href="#folder"/></svg><i class="bar"></i>
      <svg class="fold"><use href="#doccheck"/></svg>
      <svg class="fold"><use href="#folder"/></svg>
      <svg class="i8"><use href="#custom"/></svg><i class="bar"></i>
      <h1>DossierProjetStage</h1>
      <div class="win-buttons">
        <button aria-label="Réduire"><svg class="i12"><use href="#min"/></svg></button>
        <button aria-label="Restaurer"><svg class="i12"><use href="#restore"/></svg></button>
        <button aria-label="Fermer"><svg class="i12"><use href="#close"/></svg></button>
      </div>
    </header>
    <nav class="files-tabs">
      <button class="file">Fichier</button><button class="active">Accueil</button><button>Partage</button><button>Affichage</button>
      <span class="tab-end"><svg class="chev"><use href="#chev-up"/></svg><svg class="i16"><use href="#help"/></svg></span>
    </nav>
    <div class="files-ribbon">
      <section class="fgroup f-clip">
        <div class="row">
          <button class="big md"><svg class="art"><use href="#pin"/></svg>Épingler à<br>Accès rapide</button>
          <button class="big" disabled><svg class="art"><use href="#bigcopy"/></svg>Copier</button>
          <button class="big" disabled><svg class="art"><use href="#bigpaste"/></svg>Coller</button>
          <div class="list">
            <button disabled><svg class="i16"><use href="#bluecut"/></svg>Couper</button>
            <button disabled><svg class="i16"><use href="#path"/></svg>Copier le chemin d'accès</button>
            <button disabled><svg class="i16"><use href="#shortcut"/></svg>Coller le raccourci</button>
          </div>
        </div>
        <h2>Presse-papiers</h2>
      </section>
      <section class="fgroup f-org">
        <div class="row">
          <button class="big" disabled><svg class="art"><use href="#moveto"/></svg>Déplacer<br>vers <svg class="caret"><use href="#caret"/></svg></button>
          <button class="big" disabled><svg class="art"><use href="#copyto"/></svg>Copier<br>vers <svg class="caret"><use href="#caret"/></svg></button>
          <i class="bar"></i>
          <button class="big md"><svg class="art"><use href="#delete"/></svg>Supprimer<br><svg class="caret"><use href="#caret"/></svg></button>
          <button class="big md" disabled><svg class="art"><use href="#rename"/></svg>Renommer</button>
        </div>
        <h2>Organiser</h2>
      </section>
      <section class="fgroup f-new">
        <div class="row">
          <button class="big md"><svg class="art"><use href="#newfolder"/></svg>Nouveau<br>dossier</button>
          <div class="list">
            <button><svg class="i16"><use href="#newitem"/></svg>Nouvel élément<svg class="caret"><use href="#caret"/></svg></button>
            <button><svg class="i16"><use href="#easy"/></svg>Accès rapide<svg class="caret"><use href="#caret"/></svg></button>
          </div>
        </div>
        <h2>Nouveau</h2>
      </section>
      <section class="fgroup f-open">
        <div class="row">
          <button class="big md"><svg class="art"><use href="#bigcheck"/></svg>Propriétés<br><svg class="caret"><use href="#caret"/></svg></button>
          <div class="list">
            <button disabled><svg class="i16"><use href="#open"/></svg>Ouvrir<svg class="caret"><use href="#caret"/></svg></button>
            <button disabled><svg class="i16"><use href="#edit"/></svg>Modifier</button>
            <button><svg class="i16"><use href="#history"/></svg>Historique</button>
          </div>
        </div>
        <h2>Ouvrir</h2>
      </section>
      <section class="fgroup f-sel">
        <div class="row">
          <div class="list">
            <button><svg class="i16"><use href="#selall"/></svg>Sélectionner tout</button>
            <button><svg class="i16"><use href="#selnone"/></svg>Aucun</button>
            <button><svg class="i16"><use href="#selinv"/></svg>Inverser la sélection</button>
          </div>
        </div>
        <h2>Sélectionner</h2>
      </section>
    </div>
    <div class="address-row">
      <div class="nav">
        <button aria-label="Précédent"><svg class="i14"><use href="#arrow-l"/></svg></button>
        <button disabled aria-label="Suivant"><svg class="i14"><use href="#arrow-r"/></svg></button>
        <button aria-label="Emplacements récents"><svg class="i8"><use href="#chev-down"/></svg></button>
        <button aria-label="Dossier parent"><svg class="i14"><use href="#arrow-u"/></svg></button>
      </div>
      <div class="address">
        <svg class="fold"><use href="#folder"/></svg>
        <svg class="crumb"><use href="#chev-right"/></svg><a href="#e">EMTEC C410 (E:)</a>
        <svg class="crumb"><use href="#chev-right"/></svg><a href="#dwwm">DWWM</a>
        <svg class="crumb"><use href="#chev-right"/></svg><a href="#stage">DossierProjetStage</a>
        <button class="drop" aria-label="Historique"><svg class="chev"><use href="#chev-down"/></svg></button>
        <button class="reload" aria-label="Actualiser"><svg class="i12"><use href="#refresh"/></svg></button>
      </div>
      <label class="find"><svg class="i14"><use href="#search"/></svg><input type="search" placeholder="Rechercher dans : DossierProjetStage" aria-label="Rechercher dans : DossierProjetStage"></label>
    </div>
    <div class="body">
      <ul class="tree">
        <li><a href="#t"><svg class="i16"><use href="#music"/></svg>Musique</a></li>
        <li><a href="#t"><svg class="i16"><use href="#photos"/></svg>Pellicule</a></li>
        <li><a href="#t"><svg class="i16"><use href="#videos"/></svg>Vidéos</a></li>
        <li class="drive"><a href="#t"><svg class="i16"><use href="#drive"/></svg>EMTEC C410 (E:)</a></li>
        <li><a href="#t"><svg class="i16"><use href="#folder"/></svg>AFPA reussite</a></li>
        <li><a href="#t"><svg class="i16"><use href="#folder"/></svg>AFPA-Document</a></li>
        <li><a href="#t"><svg class="i16"><use href="#folder"/></svg>Algobox</a></li>
        <li><a href="#t"><svg class="i16"><use href="#folder"/></svg>base_html</a></li>
        <li><a href="#t"><svg class="i16"><use href="#folder"/></svg>capture écran</a></li>
        <li><a href="#t"><svg class="i16"><use href="#folder"/></svg>Carousel-JS</a></li>
        <li><a href="#t"><svg class="i16"><use href="#folder"/></svg>Caroussel-entrainement</a></li>
        <li><a href="#t"><svg class="i16"><use href="#folder"/></svg>cocktail</a></li>
        <li><a href="#t"><svg class="i16"><use href="#folder"/></svg>Devoir-algorithme</a></li>
        <li><a href="#t"><svg class="i16"><use href="#folder"/></svg>Devoir-Metis</a></li>
        <li><a href="#t"><svg class="i16"><use href="#folder"/></svg>Document-stage</a></li>
        <li><a href="#t"><svg class="i16"><use href="#folder"/></svg>Dossier-professionnel</a></li>
        <li><a href="#t"><svg class="i16"><use href="#folder"/></svg>DWWM</a></li>
        <li class="sub hid"><a href="#t"><svg class="i16"><use href="#folder"/></svg>.git</a></li>
        <li class="sub"><a href="#t"><svg class="i16"><use href="#folder"/></svg>.vscode</a></li>
        <li class="sub"><a href="#t"><svg class="i16"><use href="#folder"/></svg>absence-afpa</a></li>
        <li class="sub"><a href="#t"><svg class="i16"><use href="#folder"/></svg>base_html</a></li>
        <li class="sub"><a href="#t"><svg class="i16"><use href="#folder"/></svg>Carousel-JS</a></li>
        <li class="sub"><a href="#t"><svg class="i16"><use href="#folder"/></svg>chronometre_video_explicative</a></li>
        <li class="sub"><a href="#t"><svg class="i16"><use href="#folder"/></svg>creer-jeu</a></li>
        <li class="sub"><a href="#t"><svg class="i16"><use href="#folder"/></svg>css_javascript_ensemble</a></li>
        <li class="sub"><a href="#t"><svg class="i16"><use href="#folder"/></svg>Dossier-professionnel</a></li>
        <li class="sub selected"><a href="#t"><svg class="i16"><use href="#folder"/></svg>DossierProjetStage</a></li>
        <li class="sub"><a href="#t"><svg class="i16"><use href="#folder"/></svg>ECF Front End - BD</a></li>
        <li class="sub"><a href="#t"><svg class="i16"><use href="#folder"/></svg>Entrainement2</a></li>
        <li class="sub"><a href="#t"><svg class="i16"><use href="#folder"/></svg>EntrainementJS</a></li>
        <li class="sub"><a href="#t"><svg class="i16"><use href="#folder"/></svg>Excercice1</a></li>
        <li class="sub"><a href="#t"><svg class="i16"><use href="#folder"/></svg>Excercice3</a></li>
        <li class="sub"><a href="#t"><svg class="i16"><use href="#folder"/></svg>Excercice4</a></li>
        <li class="sub"><a href="#t"><svg class="i16"><use href="#folder"/></svg>Excercice5</a></li>
      </ul>
      <div class="scroll">
        <svg class="chev"><use href="#chev-up"/></svg>
        <i class="before"></i><i class="thumb"></i><i class="after"></i>
        <svg class="chev"><use href="#chev-down"/></svg>
      </div>
      <div class="content">
        <table>
          <colgroup><col class="c-name"><col class="c-date"><col class="c-type"><col class="c-size"></colgroup>
          <thead><tr><th>Nom<svg class="sorted"><use href="#chev-up"/></svg></th><th>Modifié le</th><th>Type</th><th>Taille</th></tr></thead>
          <tbody>
            <tr><td><svg class="i16"><use href="#f-odp"/></svg>DossierProjetBonus.odp</td><td>13/09/2022 11:13</td><td>Présentation Ope...</td><td>896 Ko</td></tr>
            <tr><td><svg class="i16"><use href="#f-7z"/></svg>Dossier-projet-stage.7z</td><td>14/09/2022 08:39</td><td>Fichier 7Z</td><td>2 368 Ko</td></tr>
            <tr><td><svg class="i16"><use href="#f-odt"/></svg>Dossier-projet-stage.odt</td><td>14/09/2022 15:10</td><td>Texte OpenDocu...</td><td>2 439 Ko</td></tr>
            <tr><td><svg class="i16"><use href="#f-7z"/></svg>Dossier-projet-stageAmeliore.7z</td><td>15/09/2022 16:21</td><td>Fichier 7Z</td><td>1 257 Ko</td></tr>
            <tr><td><svg class="i16"><use href="#f-docx"/></svg>Dossier-projet-stageAmeliore.docx</td><td>16/09/2022 21:22</td><td>Document Micros...</td><td>1 430 Ko</td></tr>
            <tr><td><svg class="i16"><use href="#f-odt"/></svg>Dossier-projet-stageAmeliore.odt</td><td>18/09/2022 21:29</td><td>Texte OpenDocu...</td><td>1 417 Ko</td></tr>
            <tr><td><svg class="i16"><use href="#f-odt"/></svg>MesNotesdeStage.odt</td><td>05/08/2022 10:07</td><td>Texte OpenDocu...</td><td>597 Ko</td></tr>
            <tr class="focus"><td><svg class="i16"><use href="#f-tmp"/></svg>~WRL0003.tmp</td><td>18/09/2022 20:38</td><td>Fichier TMP</td><td>8 Ko</td></tr>
            <tr><td><svg class="i16"><use href="#f-pdf"/></svg>Resume_Lefebvre_Kevin.pdf</td><td>09/09/2022 14:49</td><td>Microsoft Edge P...</td><td>27 Ko</td></tr>
            <tr><td><svg class="i16"><use href="#f-lnk"/></svg>RésuméDuProjetKévinLEFEBVRE - Racco...</td><td>09/09/2022 14:30</td><td>Raccourci</td><td>2 Ko</td></tr>
            <tr><td><svg class="i16"><use href="#f-odt"/></svg>ResumerDossierProjet.odt</td><td>12/07/2022 18:28</td><td>Texte OpenDocu...</td><td>7 Ko</td></tr>
            <tr><td><svg class="i16"><use href="#f-odt"/></svg>Resume_Lefebvre_Kevin.odt</td><td>19/09/2022 10:04</td><td>Texte OpenDocu...</td><td>8 Ko</td></tr>
          </tbody>
        </table>
      </div>
    </div>
    <footer class="files-status">
      <span>12 élément(s)</span><i class="bar"></i>
      <button class="on" aria-label="Détails"><svg class="i14"><use href="#v-detail"/></svg></button>
      <button aria-label="Grandes icônes"><svg class="i14"><use href="#v-large"/></svg></button>
    </footer>
  </div>
  <nav class="taskbar">
    <button class="cell" aria-label="Démarrer"><svg class="i16"><use href="#windows"/></svg></button>
    <button class="cell" aria-label="Rechercher"><svg class="i16"><use href="#search"/></svg></button>
    <button class="cell" aria-label="Affichage des tâches"><svg class="i16"><use href="#taskview"/></svg></button>
    <div class="apps">
      <button class="app current" aria-label="Explorateur"><svg class="i24"><use href="#explorer"/></svg></button>
      <button class="app" aria-label="Store"><svg class="i24"><use href="#store"/></svg></button>
      <button class="app" aria-label="Discord"><svg class="i24"><use href="#discord"/></svg></button>
      <button class="app" aria-label="Chrome"><svg class="i24"><use href="#chrome"/></svg></button>
      <button class="app" aria-label="Panneau"><svg class="i24"><use href="#panel"/></svg></button>
      <button class="app" aria-label="Edge"><svg class="i24"><use href="#edge"/></svg></button>
      <button class="app" aria-label="Code"><svg class="i24"><use href="#vscode"/></svg></button>
      <button class="app" aria-label="Git"><svg class="i24"><use href="#git"/></svg></button>
      <button class="app running" aria-label="Word"><svg class="i24"><use href="#wordapp"/></svg></button>
    </div>
    <div class="tray"><time class="clock">10:07<br>19/09/2022</time><i class="peek"></i></div>
  </nav>
</section>
</body>
</html>
```
FILE: styles.css
```
* { box-sizing: border-box; }
body {
  margin: 0;
  height: 100vh;
  display: grid;
  grid-template-columns: 8fr 7fr;
  background: #000;
  color: #000;
  font: 11px/14px "Noto Sans", "Open Sans", sans-serif;
}
button, input, select {
  margin: 0;
  padding: 0;
  border: 0;
  background: none;
  color: inherit;
  font: inherit;
}
button { white-space: nowrap; }
h1, h2, p, ul { margin: 0; padding: 0; }
h1, h2 { font: inherit; }
a { color: inherit; text-decoration: none; }
ul { list-style: none; }
svg { display: block; flex: none; }
.defs { position: absolute; width: 0; height: 0; }
.i8 { width: 8px; height: 8px; }
.i12 { width: 12px; height: 12px; }
.i14 { width: 14px; height: 14px; }
.i16 { width: 16px; height: 16px; }
.i18 { width: 18px; height: 18px; }
.i24 { width: 24px; height: 24px; }
.caret { width: 6px; height: 4px; color: #666; }
.chev { width: 10px; height: 6px; color: #666; }

.desktop { display: flex; flex-direction: column; min-width: 0; min-height: 0; }
.desktop-word { padding-bottom: 4px; }
.desktop-files { padding-top: 34px; }

/* Word window */
.word { flex: 1; min-height: 0; display: flex; flex-direction: column; background: #e6e6e6; color: #444; }
.word-title {
  display: grid;
  grid-template-columns: 1fr auto 1fr;
  align-items: center;
  height: 35px;
  background: #2a579a;
  color: #fff;
}
.quick { display: flex; align-items: center; gap: 12px; padding-left: 21px; }
.quick button { display: flex; align-items: center; gap: 4px; }
.quick .caret { color: #fff; }
.win-name { color: #b0c3e2; }
.win-buttons { display: flex; justify-content: flex-end; }
.win-buttons button { width: 46px; display: flex; justify-content: center; }
.word .win-buttons { color: #8aa4cd; }
.word-tabs { display: flex; align-items: stretch; height: 24px; background: #2a579a; color: #fff; }
.tab { padding: 0 14px; }
.tab.file { width: 63px; padding: 0; }
.tab.active { background: #f1f1f1; color: #2a579a; }
.tab.tell { display: flex; align-items: center; gap: 7px; color: #c3d2ea; }
.bulb { width: 10px; height: 15px; }
.login { margin-left: auto; padding-right: 10px; line-height: 24px; }
.share { display: flex; align-items: center; gap: 3px; padding: 0 8px; margin-right: 16px; background: #124078; }

.word-ribbon { display: flex; height: 93px; padding: 4px 0 3px; background: #f1f1f1; border-bottom: 1px solid #d2d2d2; }
.group { display: flex; flex-direction: column; border-right: 1px solid #d4d4d4; }
.group h2 { position: relative; margin-top: auto; line-height: 14px; text-align: center; padding-right: 14px; color: #666; }
.launch { position: absolute; right: 4px; bottom: 1px; width: 8px; height: 8px; }
.g-clip { width: 229px; }
.g-font { width: 272px; padding-left: 4px; }
.g-para { width: 225px; padding-left: 3px; }
.g-style { flex: 1; padding-left: 5px; }
.g-edit { width: 111px; padding-left: 7px; }
.g-edit h2 { padding-right: 7px; }
.clip { display: flex; padding-left: 7px; }
.coller { width: 36px; display: flex; flex-direction: column; align-items: center; padding-top: 4px; }
.coller .caret { margin-top: 8px; }
.paste { width: 28px; height: 30px; margin-bottom: 4px; }
.clip .stack { padding-left: 6px; }
.stack { display: flex; flex-direction: column; align-items: flex-start; }
.stack button { display: flex; align-items: center; gap: 3px; height: 23px; }
.stack button:disabled { color: #999; }
.stack .gap { margin-left: 8px; }
.tools { display: flex; align-items: center; height: 24px; margin-top: 6px; }
.tools + .tools { margin-top: 7px; }
.ic, .split { display: flex; align-items: center; justify-content: center; height: 24px; width: 22px; font-size: 13px; color: #555; }
.split { width: 34px; gap: 5px; padding-left: 3px; }
.ic.wide { width: 26px; }
.ic.on { background: #c5c5c5; }
.ic.small { font-size: 11px; }
.ic.grow { font-size: 15px; align-items: center; }
.pilcrow { font-size: 16px; }
.tri { width: 6px; height: 4px; align-self: flex-start; margin-top: 4px; }
.ic sub, .ic sup { font-size: 8px; line-height: 8px; color: #3e76b9; }
.ic sub { align-self: flex-end; margin-bottom: 4px; }
.ic sup { align-self: flex-start; margin-top: 4px; }
.glyph { width: 16px; text-align: center; line-height: 14px; }
.glyph.red { border-bottom: 4px solid #f00; font-size: 14px; }
.sep { width: 1px; height: 22px; margin: 0 4px 0 3px; background: #d4d4d4; }
.combo { display: flex; align-items: center; height: 23px; padding-right: 4px; background: #fff; border: 1px solid #c6c6c6; }
.combo select { flex: 1; min-width: 0; padding-left: 3px; appearance: none; outline: 0; }
.combo-font { width: 85px; }
.combo-size { width: 62px; }

.gallery { display: flex; height: 60px; margin: 2px 6px 0 0; background: #fff; border: 1px solid #ababab; }
.style { flex: 1 1 0; min-width: 0; display: flex; flex-direction: column; align-items: center; padding-top: 8px; color: #666; line-height: 16px; }
.pv { width: 58px; height: 24px; margin-bottom: 6px; overflow: hidden; text-align: left; color: #000; font: 14px/26px Lato, "Open Sans", sans-serif; }
.p-h1 { font-size: 18px; font-weight: 300; color: #2e74b5; }
.p-h2 { font-size: 16px; font-weight: 300; color: #2e74b5; }
.p-title { font-size: 34px; font-weight: 300; line-height: 18px; }
.p-grey { color: #5a5a5a; }
.p-dark { color: #404040; }
.p-blue { color: #5b9bd5; }
.p-it { font-style: italic; }
.p-bold { font-weight: 700; }
.p-caps { font-variant: small-caps; }
.p-lines { line-height: 22px; border: solid #5b9bd5; border-width: 1px 0; }
.gscroll { width: 15px; display: flex; flex-direction: column; }
.gscroll button { flex: 1; display: flex; align-items: center; justify-content: center; border-left: 1px solid #ababab; }
.gscroll button + button { border-top: 1px solid #ababab; }
.gscroll button:disabled { background: #e4e4e4; }
.gscroll button:disabled .caret { color: #b5b5b5; }
.flip { rotate: 180deg; }
.collapse { display: flex; align-items: flex-end; padding: 0 10px 2px 26px; }

.canvas { flex: 1; min-height: 0; display: flex; justify-content: center; padding-right: 16px; overflow: hidden; }
.page {
  flex: 0 1 792px;
  padding: 64px 92px 0;
  background: #fff;
  border: solid #c6c6c6;
  border-width: 0 1px;
  color: #000;
  font: 15px/20px Lato, "Open Sans", sans-serif;
}
.page h1, .page h2 { font-weight: 700; text-decoration: underline 2px; text-underline-offset: 3px; text-decoration-skip-ink: none; }
.page h1 { margin-bottom: 11px; font-size: 22px; line-height: 30px; text-align: center; }
.page h2 { margin: 40px 0 12px; font-size: 20px; line-height: 26px; text-decoration-thickness: 1px; }
.page p { margin-bottom: 12px; white-space: nowrap; }
.page .under { text-decoration: underline; text-underline-offset: 2px; text-decoration-skip-ink: none; }
.page ul { padding-left: 22px; margin-bottom: 40px; }
.page li { display: grid; grid-template-columns: 26px 1fr; margin-bottom: 12px; white-space: nowrap; }
.page li::before { content: ""; width: 7px; height: 7px; margin: 6px 0 0 3px; border-radius: 50%; background: #000; }

.word-status { display: flex; align-items: center; gap: 20px; height: 22px; padding: 0 4px 0 8px; background: #f1f1f1; border-top: 1px solid #c0c0c0; }
.views { display: flex; height: 100%; margin-left: auto; }
.views button { width: 38px; display: flex; align-items: center; justify-content: center; }
.views .on { background: #c8c8c8; }
.zoomer { display: flex; align-items: center; gap: 2px; margin: 0 -4px 0 -17px; }
.zoom-btn { width: 10px; height: 10px; display: grid; place-items: center; }
.minus { width: 7px; height: 2px; background: #555; }
.plus { width: 10px; height: 10px; background: linear-gradient(#555, #555) center / 10px 2px no-repeat, linear-gradient(#555, #555) center / 2px 10px no-repeat; }
.zoom { width: 102px; height: 12px; appearance: none; background: linear-gradient(#999, #999) center / 100% 1px no-repeat; }
.zoom::-webkit-slider-thumb { appearance: none; width: 4px; height: 11px; background: #555; }

/* Taskbars */
.taskbar { display: flex; height: 40px; flex: none; background: #2d2b28; color: #fff; }
.cell, .app { width: 48px; display: flex; align-items: center; justify-content: center; }
.tb-search { width: 344px; display: flex; align-items: center; padding: 0 12px; background: #f2f2f2; border: solid #bfbfbf; border-width: 1px 0; color: #222; }
.tb-search input { flex: 1; min-width: 0; padding-left: 10px; outline: 0; font-size: 14px; line-height: 20px; }
.tb-search input::placeholder { color: #333; opacity: 1; }
.flowers { width: 60px; height: 36px; }
.apps { display: flex; padding-left: 2px; }
.app { width: 49px; }
.app.current { background: linear-gradient(90deg, transparent 45px, #3b3a37 45px, #3b3a37 47px, #4b4a47 47px), #5a5956; border-bottom: 2px solid #76b9ed; }
.app.running { background: linear-gradient(#76b9ed, #76b9ed) bottom / 40px 2px no-repeat; }
.tray { display: flex; align-items: center; gap: 9px; margin-left: auto; }
.weather { display: flex; align-items: center; gap: 10px; padding-right: 10px; font-size: 12px; }
.tray-up { width: 12px; height: 8px; }
.clock { padding: 0 10px 0 2px; line-height: 18px; text-align: center; }
.notif { position: relative; width: 24px; height: 26px; }
.notif svg { width: 24px; height: 26px; }
.notif span { position: absolute; right: 5px; bottom: 2px; }
.peek { width: 1px; height: 40px; margin-right: 4px; background: #62605d; }

/* Explorer window */
.files { flex: 1; min-height: 0; display: flex; flex-direction: column; background: #fff; }
.files-title { display: flex; align-items: center; height: 23px; padding-left: 2px; gap: 8px; }
.files-title .win-buttons { margin-left: auto; }
.fold { width: 14px; height: 16px; }
.bar { width: 1px; height: 12px; background: #999; }
.files-tabs { display: flex; height: 24px; border-bottom: 1px solid #dadbdc; color: #333; }
.files-tabs button { padding: 0 14px; }
.files-tabs .file { width: 56px; padding: 0; background: #0063b1; color: #fff; }
.files-tabs .active { height: 24px; background: #f5f6f7; border: 1px solid #dadbdc; border-bottom: 0; }
.tab-end { display: flex; align-items: center; gap: 9px; margin-left: auto; padding-right: 3px; }
.tab-end .chev { color: #999; }
.files-ribbon { display: flex; height: 92px; padding: 2px 0 3px; background: #f5f6f7; border-bottom: 1px solid #dadbdc; color: #222; }
.fgroup { display: flex; flex-direction: column; border-right: 1px solid #e2e3e4; }
.fgroup h2 { margin-top: auto; text-align: center; color: #5a5a5a; }
.fgroup button:disabled { color: #777; }
.fgroup button:disabled .caret { color: #b0b0b0; }
.fgroup .caret { display: inline-block; color: #222; }
.f-clip { width: 318px; padding-left: 10px; }
.f-org { width: 229px; padding-left: 6px; }
.f-new { width: 177px; }
.f-open { width: 148px; }
.f-sel { width: 138px; padding-left: 7px; }
.row { display: flex; }
.row > .bar { height: 56px; margin: 6px 2px 0 1px; background: #dcdddf; }
.big { width: 46px; padding-top: 6px; line-height: 13px; text-align: center; display: block; align-self: flex-start; }
.big.md { width: 60px; }
.art { width: 28px; height: 30px; margin: 0 auto 5px; }
.list { display: flex; flex-direction: column; align-items: flex-start; padding: 2px 0 0 1px; }
.list button { display: flex; align-items: center; gap: 3px; height: 22px; }

.address-row { display: flex; padding: 5px 12px 7px; color: #111; }
.nav { display: flex; align-items: center; width: 106px; padding-left: 12px; gap: 14px; color: #707070; }
.nav button:disabled { color: #d0d0d0; }
.address { flex: 1; display: flex; align-items: center; gap: 9px; height: 30px; padding-left: 4px; border: 1px solid #d9d9d9; }
.address-row .nav { margin-left: -12px; }
.crumb { width: 5px; height: 8px; color: #555; }
.drop { margin-left: auto; }
.reload { height: 28px; width: 30px; display: grid; place-items: center; border-left: 1px solid #d9d9d9; color: #555; }
.find { display: flex; align-items: center; width: 342px; margin-left: 12px; padding-left: 14px; border: 1px solid #d9d9d9; color: #777; }
.find input { flex: 1; padding-left: 12px; outline: 0; }
.find input::placeholder { color: #6d6d6d; opacity: 1; }

.body { flex: 1; min-height: 0; display: flex; }
.tree { width: 359px; overflow: hidden; }
.tree a { display: flex; align-items: center; gap: 5px; height: 24px; padding-left: 40px; }
.tree .drive a { padding-left: 32px; }
.tree .sub a { padding-left: 48px; }
.hid svg { opacity: 0.5; }
.tree .selected { background: #d9d9d9; }
.scroll { width: 16px; display: flex; flex-direction: column; align-items: center; padding: 6px 0; background: #f0f0f0; }
.scroll .before { flex: 191; }
.scroll .thumb { flex: 217; width: 100%; background: #cdcdcd; }
.scroll .after { flex: 374; }
.content { flex: 1; min-width: 0; padding-left: 15px; margin-left: 2px; border-left: 1px solid #f2f2f2; }
table { table-layout: fixed; width: 602px; border-collapse: collapse; }
.c-name { width: 258px; }
.c-date { width: 144px; }
.c-type { width: 120px; }
.c-size { width: 80px; }
th { position: relative; height: 25px; padding: 0 0 0 6px; border-right: 1px solid #e5e5e5; text-align: left; font-weight: 400; color: #4c607a; }
th:first-child { padding-left: 3px; }
.sorted { position: absolute; top: 0; left: 123px; width: 8px; height: 5px; color: #777; }
tbody::before { content: ""; display: block; height: 6px; }
td { height: 21px; padding: 0 0 0 6px; color: #6d6d6d; white-space: nowrap; }
td:first-child { display: flex; align-items: center; gap: 4px; padding-left: 4px; color: #000; }
td:last-child { padding: 0 8px 0 0; text-align: right; }
.focus { outline: 1px solid #99d1ff; }
.files-status { display: flex; align-items: center; height: 23px; padding: 0 3px 0 15px; color: #1e395b; }
.files-status .bar { margin: 0 auto 0 10px; background: #e8e8e8; }
.files-status button { width: 24px; height: 20px; display: grid; place-items: center; }
.files-status .on { background: #cce8ff; border: 1px solid #99d1ff; }
```
